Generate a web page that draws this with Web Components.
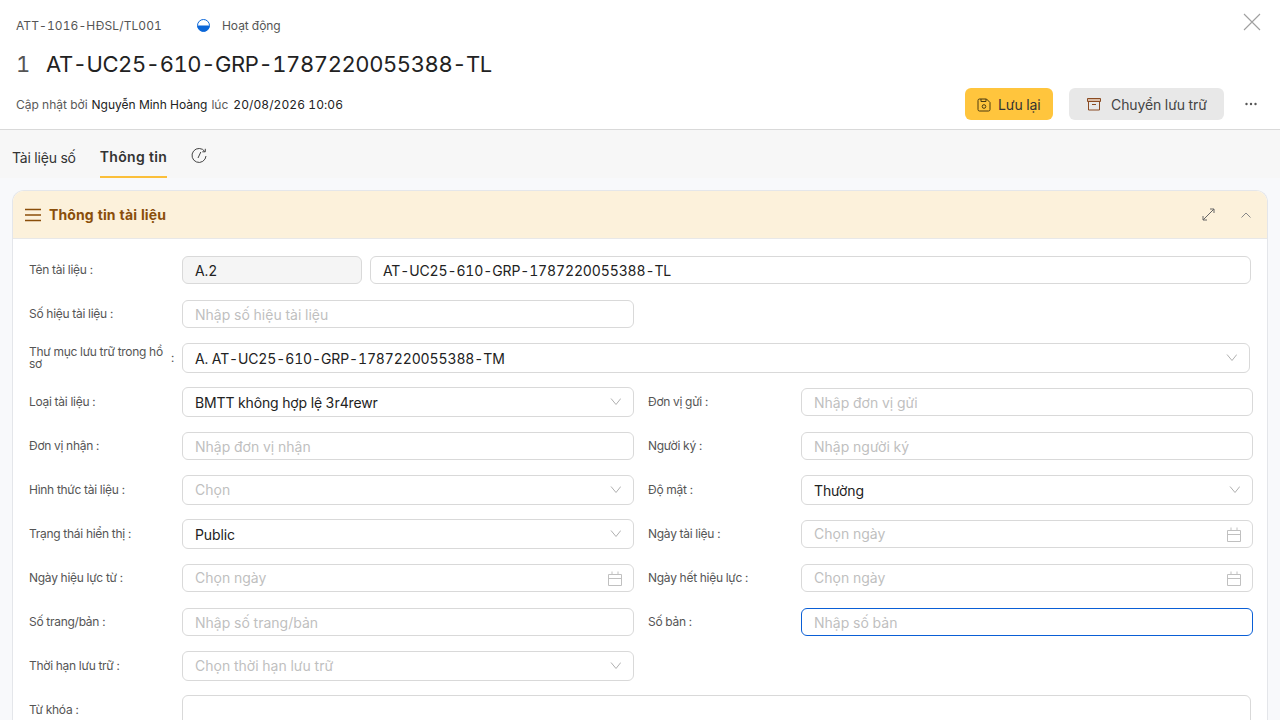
<!DOCTYPE html>
<html lang="vi">
<head>
<meta charset="utf-8">
<title>Thông tin tài liệu</title>
<style>
  html, body { margin: 0; height: 720px; overflow: hidden; background: #f8f9fb; }
  body { font-family: Inter, "Noto Sans", sans-serif; color: #1f1f1f; font-variant-numeric: tabular-nums; }
</style>
</head>
<body>
<doc-header></doc-header>
<doc-tabs></doc-tabs>
<doc-card heading="Thông tin tài liệu">
  <form-row>
    <form-field label="Tên tài liệu" wide>
      <div style="display:flex;gap:8px">
        <text-input value="A.2" disabled style="flex:0 0 180px"></text-input>
        <text-input value="AT-UC25-610-GRP-1787220055388-TL" style="flex:1"></text-input>
      </div>
    </form-field>
  </form-row>
  <form-row>
    <form-field label="Số hiệu tài liệu"><text-input placeholder="Nhập số hiệu tài liệu"></text-input></form-field>
  </form-row>
  <form-row>
    <form-field label="Thư mục lưu trữ trong hồ sơ" wide><select-input value="A. AT-UC25-610-GRP-1787220055388-TM" style="margin-right:1px"></select-input></form-field>
  </form-row>
  <form-row>
    <form-field label="Loại tài liệu"><select-input value="BMTT không hợp lệ 3r4rewr"></select-input></form-field>
    <form-field label="Đơn vị gửi"><text-input placeholder="Nhập đơn vị gửi"></text-input></form-field>
  </form-row>
  <form-row>
    <form-field label="Đơn vị nhận"><text-input placeholder="Nhập đơn vị nhận"></text-input></form-field>
    <form-field label="Người ký"><text-input placeholder="Nhập người ký"></text-input></form-field>
  </form-row>
  <form-row>
    <form-field label="Hình thức tài liệu"><select-input placeholder="Chọn"></select-input></form-field>
    <form-field label="Độ mật"><select-input value="Thường"></select-input></form-field>
  </form-row>
  <form-row>
    <form-field label="Trạng thái hiển thị"><select-input value="Public"></select-input></form-field>
    <form-field label="Ngày tài liệu"><text-input placeholder="Chọn ngày" calendar></text-input></form-field>
  </form-row>
  <form-row>
    <form-field label="Ngày hiệu lực từ"><text-input placeholder="Chọn ngày" calendar></text-input></form-field>
    <form-field label="Ngày hết hiệu lực"><text-input placeholder="Chọn ngày" calendar></text-input></form-field>
  </form-row>
  <form-row>
    <form-field label="Số trang/bản"><text-input placeholder="Nhập số trang/bản"></text-input></form-field>
    <form-field label="Số bản"><text-input placeholder="Nhập số bản" focused></text-input></form-field>
  </form-row>
  <form-row>
    <form-field label="Thời hạn lưu trữ"><select-input placeholder="Chọn thời hạn lưu trữ"></select-input></form-field>
  </form-row>
  <form-row>
    <form-field label="Từ khóa" wide top><text-input tall></text-input></form-field>
  </form-row>
</doc-card>

<script>
// Icons used by more than one element.
const chevronDown = '<svg width="12" height="12" viewBox="0 0 12 12" fill="none" stroke="#b0b0b0" stroke-width="1"><path d="M2 2.500 7 8.500 11.800 2.500"/></svg>'
const calendar = '<svg width="14" height="15" viewBox="0 0 14 15" fill="none" stroke="#c0c0c0" stroke-width="1"><path d="M.5 3.500h13v11H.5zM.5 7.500h13M4 .5v3M10 .5v3"/></svg>'

// Header of the document dialog.
customElements.define('doc-header', class extends HTMLElement {
  constructor () {
    super()
    this.attachShadow({ mode: 'open' }).innerHTML = `
    <style>
      :host { display: block; box-sizing: border-box; height: 130px; padding: 0 16px; background: #fff; border-bottom: 1px solid #d9d9d9; }
      .top { display: flex; align-items: center; height: 50px; font-size: 12px; color: #555; }
      .code { width: 181px; letter-spacing: .1px; }
      .status { display: flex; align-items: center; gap: 12px; letter-spacing: -.05px; }
      .close { margin-left: auto; margin-right: 3px; margin-top: -6px; display: flex; }
      .title { display: flex; align-items: center; height: 24px; margin-top: 2px; font-size: 22px; color: #222; letter-spacing: -.42px; }
      .title span:first-child { width: 30px; color: #555; }
      .bottom { display: flex; align-items: center; margin-top: 8px; height: 40px; font-size: 12px; color: #595959; }
      .bottom b { font-weight: 400; color: #222; margin: 0 4px; }
      .bottom b + b { letter-spacing: .08px; margin-left: 5px; }
      .actions { margin-left: auto; display: flex; align-items: center; }
      button { display: flex; align-items: center; height: 32px; border: 0; border-radius: 6px; font: inherit; font-size: 14px; color: #333; padding: 0; letter-spacing: -.1px; }
      .save { background: #ffc53d; width: 88px; padding-left: 12px; gap: 7px; }
      .save svg { margin-top: 1px; }
      .archive { background: #e8e8e8; width: 155px; padding-left: 18px; gap: 10px; margin-left: 16px; color: #444; }
      .more { margin-left: 21px; margin-right: 7px; display: flex; }
    </style>
    <div class="top">
      <span class="code">ATT-1016-HĐSL/TL001</span>
      <span class="status">
        <svg width="13" height="13" viewBox="0 0 13 13"><circle cx="6.500" cy="6.500" r="6" fill="#fff" stroke="#0a66d8"/><path d="M.5 6.500a6 6 0 0 0 12 0z" fill="#0a66d8"/></svg>
        Hoạt động
      </span>
      <span class="close">
        <svg width="18" height="18" viewBox="0 0 18 18" stroke="#a0a0a0" stroke-width="1.100"><path d="M1 1 17 17M17 1 1 17"/></svg>
      </span>
    </div>
    <div class="title"><span>1</span><span>AT-UC25-610-GRP-1787220055388-TL</span></div>
    <div class="bottom">
      Cập nhật bởi <b>Nguyễn Minh Hoàng</b> lúc <b>20/08/2026 10:06</b>
      <span class="actions">
        <button class="save">
          <svg width="14" height="14" viewBox="0 0 14 14" fill="none" stroke="#4a3a10"><path d="M2.500 1h7L13 4.500v7a1.500 1.500 0 0 1-1.500 1.500h-9A1.500 1.500 0 0 1 1 11.500v-9A1.500 1.500 0 0 1 2.500 1zM4 1v2.500h5V1"/><circle cx="7" cy="8.500" r="1.800"/></svg>
          Lưu lại
        </button>
        <button class="archive">
          <svg width="14" height="14" viewBox="0 0 14 14" fill="none" stroke="#8a4b22"><path d="M.5 1.500h13v3H.5z" fill="#d9bba5"/><path d="M1.500 4.500v8.500h11V4.500M5 7.500h4"/></svg>
          Chuyển lưu trữ
        </button>
        <span class="more">
          <svg width="12" height="4" viewBox="0 0 12 4" fill="#555"><circle cx="1.500" cy="2" r="1.200"/><circle cx="6" cy="2" r="1.200"/><circle cx="10.500" cy="2" r="1.200"/></svg>
        </span>
      </span>
    </div>`
  }
})

// Tab strip under the header.
customElements.define('doc-tabs', class extends HTMLElement {
  constructor () {
    super()
    this.attachShadow({ mode: 'open' }).innerHTML = `
    <style>
      :host { display: flex; align-items: stretch; gap: 24px; height: 48px; padding: 0 12px; background: #f7f7f7; font-size: 14px; color: #333; }
      div { display: flex; align-items: center; padding-top: 6px; box-sizing: border-box; letter-spacing: -.18px; }
      .active { font-weight: 600; border-bottom: 2px solid #fbbf3a; padding-top: 6px; letter-spacing: .3px; }
      svg { margin-bottom: 3px; }
    </style>
    <div>Tài liệu số</div>
    <div class="active">Thông tin</div>
    <div><svg width="16" height="16" viewBox="0 0 16 16" fill="none" stroke="#444"><path d="M13.800 3.500A7 7 0 1 0 15 8M14.300 .8v3h-3M9.800 4 7 10"/></svg></div>`
  }
})

// Collapsible card around the form, cut off by the bottom of the window.
customElements.define('doc-card', class extends HTMLElement {
  constructor () {
    super()
    this.attachShadow({ mode: 'open' }).innerHTML = `
    <style>
      :host { display: block; box-sizing: border-box; margin: 12px 12px 0; height: 530px; background: #fff; border: 1px solid #e4e6ea; border-bottom: 0; border-radius: 12px 12px 0 0; overflow: hidden; }
      header { display: flex; align-items: center; height: 47px; padding: 0 16px 0 12px; background: #fcf1db; border-bottom: 1px solid #e8e8e8; }
      h2 { margin: 0 0 0 8px; font-size: 14px; font-weight: 700; color: #8a4e0a; letter-spacing: .12px; }
      .tools { margin-left: auto; display: flex; align-items: center; gap: 26px; }
      svg { display: block; }
      main { padding: 16px 15px 0 16px; }
    </style>
    <header>
      <svg width="16" height="14" viewBox="0 0 16 14" stroke="#8a4e0a" stroke-width="1.300"><path d="M0 1.500h16M0 7h16M0 12.500h16"/></svg>
      <h2></h2>
      <span class="tools">
        <svg width="13" height="13" viewBox="0 0 13 13" fill="none" stroke="#666"><path d="M1 12 12 1M8 1h4v4M5 12H1V8"/></svg>
        <svg width="10" height="6" viewBox="0 0 10 6" fill="none" stroke="#888"><path d="M.5 5.500 5 1l4.500 4.500"/></svg>
      </span>
    </header>
    <main><slot></slot></main>`
    this.shadowRoot.querySelector('h2').textContent = this.getAttribute('heading')
  }
})

// One row of the form, always 44px from centre to centre.
customElements.define('form-row', class extends HTMLElement {
  constructor () {
    super()
    this.attachShadow({ mode: 'open' }).innerHTML = `
    <style>
      :host { display: grid; grid-template-columns: 605px 605px; column-gap: 14px; align-items: center; height: 30px; margin-bottom: 14px; }
    </style>
    <slot></slot>`
  }
})

// Label and control pair.
customElements.define('form-field', class extends HTMLElement {
  constructor () {
    super()
    this.attachShadow({ mode: 'open' }).innerHTML = `
    <style>
      :host { display: grid; grid-template-columns: 153px 1fr; align-items: center; min-width: 0; }
      :host([wide]) { grid-column: 1 / -1; margin-right: 2px; }
      :host([top]) { align-items: start; align-self: start; }
      :host([top]) label { height: 30px; }
      label { display: flex; align-items: center; font-size: 12px; line-height: 12px; color: #555; letter-spacing: -.27px; padding-right: 8px; }
      .colon { margin-left: 3px; white-space: nowrap; }
    </style>
    <label><span class="text"></span><span class="colon">:</span></label>
    <div><slot></slot></div>`
    this.shadowRoot.querySelector('.text').textContent = this.getAttribute('label')
  }
})

// Plain input, also used for date fields and for the focused state.
customElements.define('text-input', class extends HTMLElement {
  constructor () {
    super()
    const placeholder = this.getAttribute('placeholder')
    this.attachShadow({ mode: 'open' }).innerHTML = `
    <style>
      :host { display: flex; align-items: center; box-sizing: border-box; height: 28px; padding: 0 12px; background: #fff; border: 1px solid #d9d9d9; border-radius: 6px; font-size: 14px; color: #222; overflow: hidden; }
      :host([disabled]) { background: #f5f5f5; }
      :host([focused]) { border-color: #0a5fd6; }
      :host([tall]) { height: 60px; }
      .ph { color: #bfbfbf; letter-spacing: 0; }
      span { flex: 1; letter-spacing: -.13px; padding-top: 1px; }
      :host([calendar]) span { padding-top: 0; padding-bottom: 1px; }
      svg { display: block; margin-top: 1px; margin-right: -1px; }
    </style>
    <span class="${placeholder ? 'ph' : ''}"></span>
    ${this.hasAttribute('calendar') ? calendar : ''}`
    this.shadowRoot.querySelector('span').textContent = placeholder || this.getAttribute('value') || ''
  }
})

// Select box with its chevron.
customElements.define('select-input', class extends HTMLElement {
  constructor () {
    super()
    const placeholder = this.getAttribute('placeholder')
    this.attachShadow({ mode: 'open' }).innerHTML = `
    <style>
      :host { display: flex; align-items: center; box-sizing: border-box; height: 30px; padding: 0 12px; background: #fff; border: 1px solid #d9d9d9; border-radius: 6px; font-size: 14px; color: #222; }
      .ph { color: #bfbfbf; letter-spacing: 0; padding-top: 0; padding-bottom: 1px; }
      span { flex: 1; letter-spacing: -.13px; padding-top: 1px; }
      svg { display: block; }
    </style>
    <span class="${placeholder ? 'ph' : ''}"></span>
    ${chevronDown}`
    this.shadowRoot.querySelector('span').textContent = placeholder || this.getAttribute('value') || ''
  }
})
</script>
</body>
</html>
